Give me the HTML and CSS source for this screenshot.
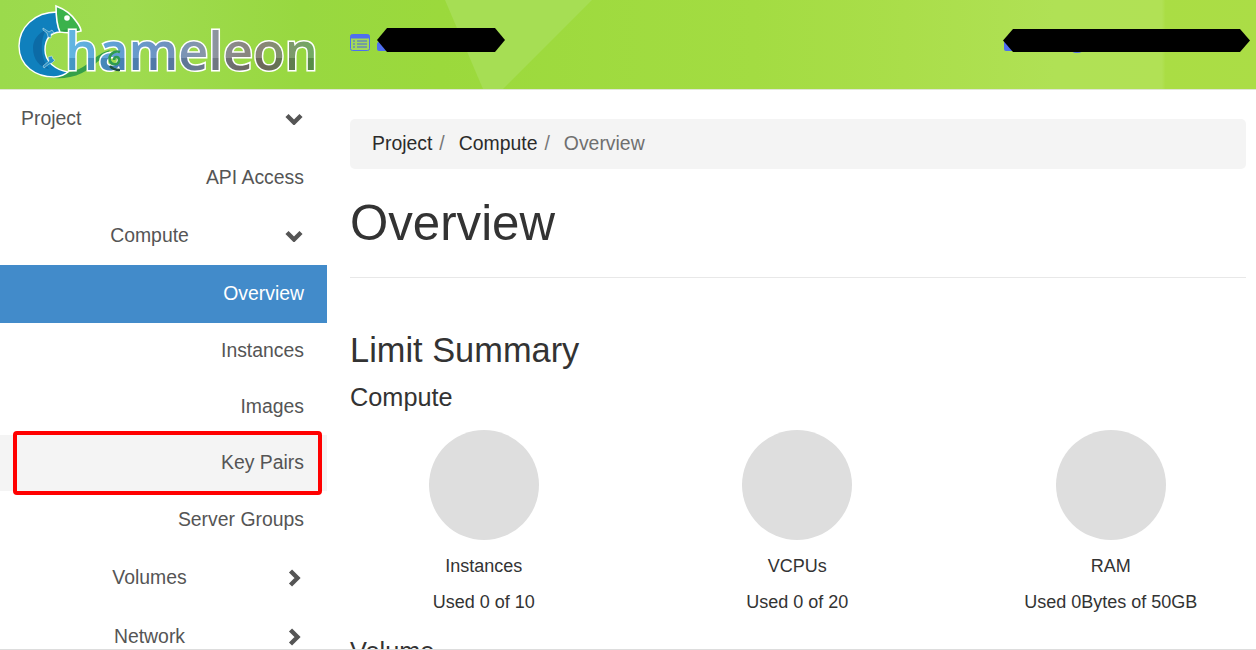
FILE: index.html
```html
<!DOCTYPE html>
<html lang="en">
<head>
    <meta charset="UTF-8">
    <title>Overview</title>
    <link rel="stylesheet" href="styles.css">
</head>
<body>
    <header class="topbar">
        <svg class="topbar-bg" width="1256" height="89" viewBox="0 0 1256 89">
            <defs>
                <linearGradient id="bgGrad" x1="0" y1="0" x2="1" y2="0">
                    <stop offset="0" stop-color="#9bda4c"/>
                    <stop offset="0.1" stop-color="#9fdb50"/>
                    <stop offset="0.24" stop-color="#98d840"/>
                    <stop offset="0.35" stop-color="#9bd93c"/>
                    <stop offset="0.6" stop-color="#a3dc42"/>
                    <stop offset="0.72" stop-color="#aade4a"/>
                    <stop offset="0.84" stop-color="#b0e155"/>
                    <stop offset="0.925" stop-color="#b1e155"/>
                    <stop offset="0.928" stop-color="#aadd44"/>
                    <stop offset="1" stop-color="#abdd46"/>
                </linearGradient>
            </defs>
            <rect width="1256" height="89" fill="url(#bgGrad)"/>
            <polygon points="445,0 592,0 503,89 483,89" fill="#a6de54"/>
        </svg>

        <a class="logo" href="#">
            <svg width="330" height="89" viewBox="0 0 330 89">
                <defs>
                    <linearGradient id="textGrad" x1="65" y1="0" x2="318" y2="0" gradientUnits="userSpaceOnUse">
                        <stop offset="0" stop-color="#4fb0e0"/>
                        <stop offset="0.2" stop-color="#4f94cf"/>
                        <stop offset="0.4" stop-color="#5f86b8"/>
                        <stop offset="0.58" stop-color="#808a98"/>
                        <stop offset="0.68" stop-color="#7c7a78"/>
                        <stop offset="0.78" stop-color="#7b7666"/>
                        <stop offset="0.88" stop-color="#6f8a5c"/>
                        <stop offset="1" stop-color="#5fa54e"/>
                    </linearGradient>
                    <pattern id="textFill" width="330" height="89" patternUnits="userSpaceOnUse">
                        <rect width="330" height="89" fill="url(#textGrad)"/>
                        <rect width="330" height="58" fill="#fff" opacity="0.1"/>
                        <rect y="58" width="330" height="31" fill="#000" opacity="0.12"/>
                    </pattern>
                </defs>
                <!-- tail behind the letters -->
                <path d="M46 72 C62 76 78 72 90 62 C96 57 102 52 110 50 L106 56 C98 60 92 68 82 73 C70 79 56 79 46 77 Z" fill="#35a048"/>
                <!-- body -->
                <path d="M57 12 C34 12 19 28 19 46 C19 66 36 77 54 77 C60 77 66 74 68 72 C56 70 45 62 45 50 C45 40 49 33 60 32 Z" fill="#0f80bd" stroke="#fff" stroke-width="1.4"/>
                <path d="M46 30 C40 40 40 58 49 69 C40 67 33 60 33 48 C33 40 38 33 46 30 Z" fill="#0c6ba6"/>
                <path d="M43 28 l6 4 l3 -2 l2 3 l-3 1 l0 4 l-3 -1 l-1 -4 l-4 -3 Z" fill="#2a92c8" stroke="#e8f4f0" stroke-width="0.5"/>
                <path d="M43 66 l6 -5 l-1 -4 l4 -1 l1 3 l2 1 l-3 3 l-3 1 l-5 4 Z" fill="#2a92c8" stroke="#e8f4f0" stroke-width="0.5"/>
                <!-- head -->
                <path d="M56 6 C64 9 72 15 76 21 C79 25 81 28 81 31 C74 33 66 33 60 32 C57 26 56 16 56 6 Z" fill="#3bb24c" stroke="#fff" stroke-width="1.6"/>
                <path d="M60 31 C66 29 74 29 80 30 C74 32 66 32 60 31 Z" fill="#2a9a42"/>
                <circle cx="67" cy="18" r="2.8" fill="#fff"/>
                <text class="logo-text" x="65" y="70" textLength="253" lengthAdjust="spacingAndGlyphs" fill="url(#textFill)">hameleon</text>
                <!-- swirl on the a -->
                <path d="M114 60 C114 56 119 56 119 60 C119 65 112 66 110 61 C108 55 114 50 120 52" fill="none" stroke="#2f9a50" stroke-width="2.6"/>
                <path d="M110 66 C113 70 117 70 120 70" fill="none" stroke="#1d4f3f" stroke-width="2.4"/>
            </svg>
        </a>

        <div class="project-pick">
            <svg class="list-icon" width="20" height="17" viewBox="0 0 20 17">
                <rect x="0.5" y="0.5" width="19" height="16" rx="2" fill="#a2d85a" stroke="#4f6ff0"/>
                <rect x="0.5" y="0.5" width="19" height="4" rx="1.5" fill="#4f6ff0"/>
                <path d="M3 7h2M7 7h10M3 10h2M7 10h10M3 13h2M7 13h10" stroke="#4666e0" stroke-width="1.2"/>
            </svg>
            <div class="redacted redacted-project"></div>
        </div>

        <div class="user-pick">
            <div class="redacted redacted-user"></div>
        </div>
    </header>

    <div class="layout">
        <nav class="sidebar">
            <a class="nav-row nav-top" href="#">
                <span class="nav-label">Project</span>
                <svg class="chev" width="18" height="12" viewBox="0 0 18 12"><path d="M2 2.5l7 7 7-7" /></svg>
            </a>
            <a class="nav-row nav-leaf" href="#">API Access</a>
            <a class="nav-row nav-group" href="#">
                <span class="nav-label">Compute</span>
                <svg class="chev" width="18" height="12" viewBox="0 0 18 12"><path d="M2 2.5l7 7 7-7" /></svg>
            </a>
            <a class="nav-row nav-leaf active" href="#">Overview</a>
            <a class="nav-row nav-leaf short" href="#">Instances</a>
            <a class="nav-row nav-leaf short" href="#">Images</a>
            <a class="nav-row nav-leaf short hovered" href="#">Key Pairs</a>
            <a class="nav-row nav-leaf short last" href="#">Server Groups</a>
            <a class="nav-row nav-group tall" href="#">
                <span class="nav-label">Volumes</span>
                <svg class="chev" width="18" height="18" viewBox="0 0 18 18"><path d="M5.5 2l7 7-7 7" /></svg>
            </a>
            <a class="nav-row nav-group tall" href="#">
                <span class="nav-label">Network</span>
                <svg class="chev" width="18" height="18" viewBox="0 0 18 18"><path d="M5.5 2l7 7-7 7" /></svg>
            </a>
        </nav>

        <main class="content">
            <ol class="breadcrumb">
                <li>Project</li>
                <li class="sep">/</li>
                <li>Compute</li>
                <li class="sep">/</li>
                <li class="current">Overview</li>
            </ol>

            <h1 class="page-title">Overview</h1>

            <h2 class="limit-title">Limit Summary</h2>
            <h3 class="limit-sub">Compute</h3>

            <div class="charts">
                <div class="chart">
                    <div class="pie"></div>
                    <div class="chart-name">Instances</div>
                    <div class="chart-used">Used 0 of 10</div>
                </div>
                <div class="chart">
                    <div class="pie"></div>
                    <div class="chart-name">VCPUs</div>
                    <div class="chart-used">Used 0 of 20</div>
                </div>
                <div class="chart">
                    <div class="pie"></div>
                    <div class="chart-name">RAM</div>
                    <div class="chart-used">Used 0Bytes of 50GB</div>
                </div>
            </div>

            <h3 class="limit-sub volume">Volume</h3>
        </main>
    </div>

    <div class="callout"></div>
    <div class="page-edge"></div>
</body>
</html>
```
FILE: styles.css
```css
html, body {
    margin: 0;
    height: 650px;
    overflow: hidden;
}
body {
    position: relative;
    font-family: "Liberation Sans", Arial, sans-serif;
    font-size: 19.4px;
    line-height: 1.43;
    color: #333;
    background-color: #fff;
}

.topbar {
    position: relative;
    height: 89px;
    display: flex;
    align-items: flex-start;
    border-bottom: 1px solid #dfe6d5;
}
.topbar-bg {
    position: absolute;
    left: 0;
    top: 0;
}
.logo {
    position: relative;
    width: 350px;
    height: 89px;
    flex: none;
}
.logo-text {
    font-family: "Open Sans", sans-serif;
    font-weight: 600;
    font-size: 53px;
    stroke: #fff;
    stroke-width: 3px;
    paint-order: stroke;
}
.project-pick {
    position: relative;
    z-index: 0;
    display: flex;
    align-items: center;
    gap: 7px;
    margin-top: 28px;
}
.list-icon {
    display: block;
    margin-top: 5px;
}
.redacted {
    background-color: #000;
    clip-path: polygon(10px 0, calc(100% - 10px) 0, 100% 50%, calc(100% - 10px) 100%, 10px 100%, 0 50%);
}
.redacted-project {
    width: 128px;
    height: 24px;
}
/* bits of the blue icons that stick out under the black bars */
.project-pick::after, .user-pick::before, .user-pick::after {
    content: "";
    position: absolute;
    background-color: #4f6ff0;
    z-index: -1;
}
.project-pick::after {
    left: 27px;
    top: 14px;
    width: 10px;
    height: 9px;
    border-radius: 2px;
}
.user-pick {
    position: relative;
    z-index: 0;
    margin-left: auto;
    margin-right: 6px;
    margin-top: 29px;
}
.user-pick::before {
    left: 1px;
    top: 12px;
    width: 12px;
    height: 10px;
    border-radius: 2px;
}
.user-pick::after {
    left: 67px;
    top: 16px;
    width: 14px;
    height: 8px;
    border-radius: 50%;
}
.redacted-user {
    width: 247px;
    height: 23px;
}

.layout {
    display: flex;
}
.sidebar {
    width: 327px;
    flex: none;
}
.nav-row {
    display: flex;
    align-items: center;
    height: 58px;
    color: #555;
    text-decoration: none;
    box-sizing: border-box;
}
.nav-row.nav-top {
    height: 59px;
    padding-bottom: 1px;
}
.nav-row.short {
    height: 56px;
}
.nav-row.short.last {
    height: 57px;
}
.nav-row.tall {
    height: 59px;
}
.nav-leaf {
    justify-content: flex-end;
    padding-right: 23px;
}
.nav-top, .nav-group {
    padding-left: 21px;
    padding-right: 24px;
}
.nav-group .nav-label {
    flex: 1;
    text-align: center;
}
.nav-top .nav-label {
    flex: 1;
}
.chev {
    flex: none;
    margin-left: 7px;
}
.chev path {
    fill: none;
    stroke: #555;
    stroke-width: 4.4;
}
.nav-leaf.active {
    background-color: #428bca;
    color: #fff;
}
.nav-leaf.hovered {
    background-color: #f4f4f4;
}

.content {
    flex: 1;
    padding: 29px 10px 0 23px;
    min-width: 0;
}
.breadcrumb {
    list-style: none;
    display: flex;
    align-items: center;
    height: 50px;
    margin: 0;
    padding: 0 22px;
    background-color: #f4f4f4;
    border-radius: 5px;
    color: #2b2b2b;
}
.breadcrumb .sep {
    color: #777;
    padding: 0 14px 0 7px;
}
.breadcrumb .current {
    color: #6f6f6f;
}
.page-title {
    margin: 24px 0 0;
    padding-bottom: 24px;
    font-size: 49.2px;
    font-weight: 400;
    line-height: 60px;
    border-bottom: 1px solid #e8e8e8;
}
.limit-title {
    margin: 52px 0 0;
    font-size: 34.4px;
    font-weight: 400;
    line-height: 40px;
}
.limit-sub {
    margin: 12px 0 0;
    font-size: 25.3px;
    font-weight: 400;
    line-height: 30px;
}
.charts {
    display: grid;
    grid-template-columns: repeat(3, 313.5px);
    margin: 18px 0 0 -23px;
    font-size: 18px;
}
.chart {
    text-align: center;
}
.pie {
    width: 110px;
    height: 110px;
    margin: 0 auto;
    border-radius: 50%;
    background-color: #dedede;
}
.chart-name {
    margin-top: 13px;
    line-height: 26px;
}
.chart-used {
    margin-top: 10px;
    line-height: 26px;
}
.limit-sub.volume {
    margin-top: 21px;
}

/* red box drawn over the sidebar */
.callout {
    position: absolute;
    left: 13px;
    top: 431px;
    width: 309px;
    height: 64px;
    box-sizing: border-box;
    border: 4px solid #f00;
    border-radius: 4px;
}
.page-edge {
    position: absolute;
    left: 0;
    right: 0;
    top: 649px;
    height: 1px;
    background-color: #ddd;
}
```
